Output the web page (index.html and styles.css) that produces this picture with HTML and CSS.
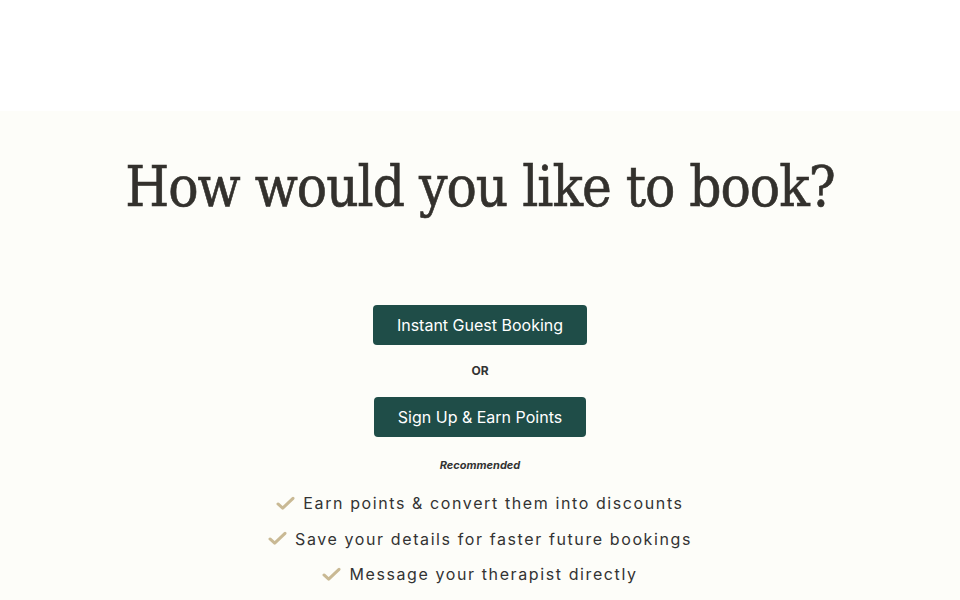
FILE: index.html
```html
<!DOCTYPE html>
<html lang="en">
<head>
<meta charset="utf-8">
<title>How would you like to book?</title>
<link rel="stylesheet" href="styles.css">
</head>
<body>
<div class="topbar"></div>
<main class="section">
  <h1 class="title">How would you like to book?</h1>
  <div class="actions">
    <button class="btn">Instant Guest Booking</button>
    <div class="or">OR</div>
    <button class="btn">Sign Up &amp; Earn Points</button>
    <div class="rec">Recommended</div>
  </div>
  <ul class="perks">
    <li><svg class="check" viewBox="0 0 20 16" width="19" height="15"><path d="M2 8.5 L7 13 L18 2.5" fill="none" stroke="#c9b994" stroke-width="3.2" stroke-linecap="round" stroke-linejoin="round"/></svg><span>Earn points &amp; convert them into discounts</span></li>
    <li><svg class="check" viewBox="0 0 20 16" width="19" height="15"><path d="M2 8.5 L7 13 L18 2.5" fill="none" stroke="#c9b994" stroke-width="3.2" stroke-linecap="round" stroke-linejoin="round"/></svg><span>Save your details for faster future bookings</span></li>
    <li><svg class="check" viewBox="0 0 20 16" width="19" height="15"><path d="M2 8.5 L7 13 L18 2.5" fill="none" stroke="#c9b994" stroke-width="3.2" stroke-linecap="round" stroke-linejoin="round"/></svg><span>Message your therapist directly</span></li>
  </ul>
</main>
</body>
</html>
```
FILE: styles.css
```css
html, body {
  margin: 0;
  padding: 0;
  background: #ffffff;
}
body {
  font-family: Inter, "Noto Sans", sans-serif;
  color: #333333;
}
.topbar {
  height: 111px;
  background: #ffffff;
}
.section {
  background: #fdfdf9;
  min-height: 489px;
  display: flex;
  flex-direction: column;
  align-items: center;
}
.title {
  margin: 40px 0 0;
  font-family: "DejaVu Serif Condensed", "DejaVu Serif", serif;
  font-weight: normal;
  font-size: 56px;
  line-height: 72px;
  color: #33312d;
  letter-spacing: -1px;
  -webkit-text-stroke: 0.6px #33312d;
}
.actions {
  margin-top: 82px;
  display: flex;
  flex-direction: column;
  align-items: center;
}
.btn {
  font-family: Inter, sans-serif;
  font-size: 16px;
  color: #ffffff;
  background: #1f4d48;
  border: none;
  border-radius: 4px;
  height: 40px;
  padding: 0 24px;
}
.or {
  font-size: 12px;
  font-weight: 700;
  margin: 18px 0 19px;
  line-height: 15px;
}
.rec {
  font-size: 11px;
  font-weight: 700;
  font-style: italic;
  margin-top: 22px;
  line-height: 13px;
}
.perks {
  list-style: none;
  margin: 21px 0 0;
  padding: 0;
  display: flex;
  flex-direction: column;
  align-items: center;
  gap: 15.5px;
}
.perks li {
  display: flex;
  align-items: center;
  gap: 8px;
  font-size: 16px;
  line-height: 20px;
  letter-spacing: 1.6px;
  color: #333333;
}
.check {
  display: block;
}
```
